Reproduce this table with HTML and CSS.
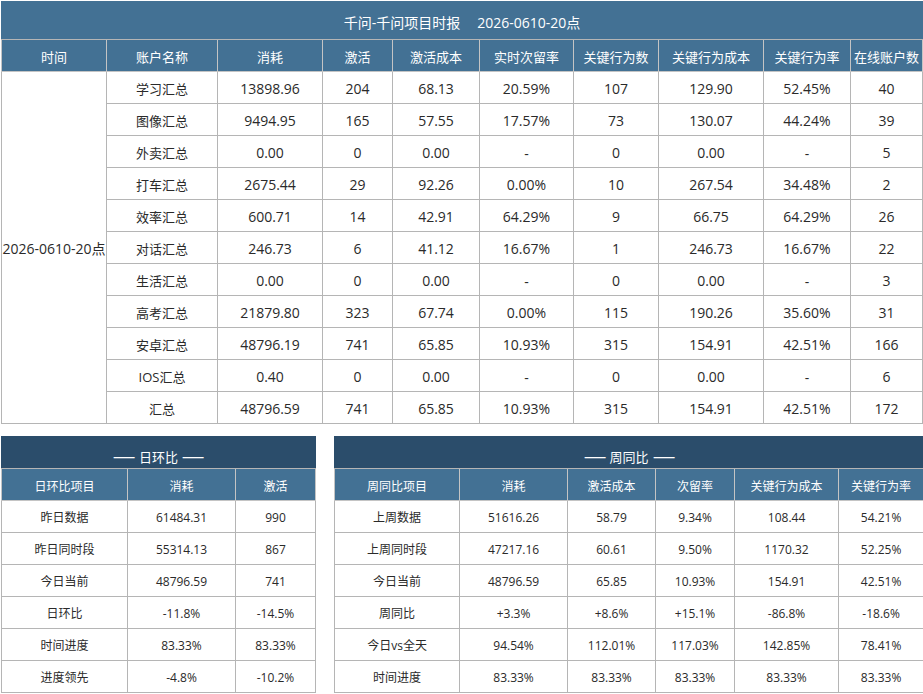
FILE: index.html
```html
<!DOCTYPE html>
<html lang="zh-CN">
<head>
<meta charset="utf-8">
<title>千问-千问项目时报</title>
<link rel="stylesheet" href="styles.css">
</head>
<body>
<div class="page">
  <table class="report main">
    <colgroup>
      <col style="width:105px"><col style="width:111px"><col style="width:105px"><col style="width:70px"><col style="width:87px"><col style="width:94px"><col style="width:85px"><col style="width:105px"><col style="width:87px"><col style="width:72px">
    </colgroup>
    <thead>
      <tr class="title-row"><th colspan="10">千问-千问项目时报<span class="gap"></span>2026-0610-20点</th></tr>
      <tr class="head-row">
        <th>时间</th><th>账户名称</th><th>消耗</th><th>激活</th><th>激活成本</th><th>实时次留率</th><th>关键行为数</th><th>关键行为成本</th><th>关键行为率</th><th>在线账户数</th>
      </tr>
    </thead>
    <tbody>
      <tr><td rowspan="11" class="time-cell">2026-0610-20点</td><td class="nm">学习汇总</td><td>13898.96</td><td>204</td><td>68.13</td><td>20.59%</td><td>107</td><td>129.90</td><td>52.45%</td><td>40</td></tr>
      <tr><td class="nm">图像汇总</td><td>9494.95</td><td>165</td><td>57.55</td><td>17.57%</td><td>73</td><td>130.07</td><td>44.24%</td><td>39</td></tr>
      <tr><td class="nm">外卖汇总</td><td>0.00</td><td>0</td><td>0.00</td><td><span class="dash">-</span></td><td>0</td><td>0.00</td><td><span class="dash">-</span></td><td>5</td></tr>
      <tr><td class="nm">打车汇总</td><td>2675.44</td><td>29</td><td>92.26</td><td>0.00%</td><td>10</td><td>267.54</td><td>34.48%</td><td>2</td></tr>
      <tr><td class="nm">效率汇总</td><td>600.71</td><td>14</td><td>42.91</td><td>64.29%</td><td>9</td><td>66.75</td><td>64.29%</td><td>26</td></tr>
      <tr><td class="nm">对话汇总</td><td>246.73</td><td>6</td><td>41.12</td><td>16.67%</td><td>1</td><td>246.73</td><td>16.67%</td><td>22</td></tr>
      <tr><td class="nm">生活汇总</td><td>0.00</td><td>0</td><td>0.00</td><td><span class="dash">-</span></td><td>0</td><td>0.00</td><td><span class="dash">-</span></td><td>3</td></tr>
      <tr><td class="nm">高考汇总</td><td>21879.80</td><td>323</td><td>67.74</td><td>0.00%</td><td>115</td><td>190.26</td><td>35.60%</td><td>31</td></tr>
      <tr><td class="nm">安卓汇总</td><td>48796.19</td><td>741</td><td>65.85</td><td>10.93%</td><td>315</td><td>154.91</td><td>42.51%</td><td>166</td></tr>
      <tr><td class="nm">IOS汇总</td><td>0.40</td><td>0</td><td>0.00</td><td><span class="dash">-</span></td><td>0</td><td>0.00</td><td><span class="dash">-</span></td><td>6</td></tr>
      <tr><td class="nm">汇总</td><td>48796.59</td><td>741</td><td>65.85</td><td>10.93%</td><td>315</td><td>154.91</td><td>42.51%</td><td>172</td></tr>
    </tbody>
  </table>

  <div class="bottom">
    <table class="report small day">
      <colgroup><col style="width:126px"><col style="width:108px"><col style="width:80px"></colgroup>
      <thead>
        <tr class="sub-title"><th colspan="3"><span class="rule">—</span>日环比<span class="rule">—</span></th></tr>
        <tr class="head-row"><th>日环比项目</th><th>消耗</th><th>激活</th></tr>
      </thead>
      <tbody>
        <tr><td>昨日数据</td><td>61484.31</td><td>990</td></tr>
        <tr><td>昨日同时段</td><td>55314.13</td><td>867</td></tr>
        <tr><td>今日当前</td><td>48796.59</td><td>741</td></tr>
        <tr><td>日环比</td><td>-11.8%</td><td>-14.5%</td></tr>
        <tr><td>时间进度</td><td>83.33%</td><td>83.33%</td></tr>
        <tr><td>进度领先</td><td>-4.8%</td><td>-10.2%</td></tr>
      </tbody>
    </table>

    <table class="report small week">
      <colgroup><col style="width:125px"><col style="width:108px"><col style="width:88px"><col style="width:79px"><col style="width:104px"><col style="width:85px"></colgroup>
      <thead>
        <tr class="sub-title"><th colspan="6"><span class="rule">—</span>周同比<span class="rule">—</span></th></tr>
        <tr class="head-row"><th>周同比项目</th><th>消耗</th><th>激活成本</th><th>次留率</th><th>关键行为成本</th><th>关键行为率</th></tr>
      </thead>
      <tbody>
        <tr><td>上周数据</td><td>51616.26</td><td>58.79</td><td>9.34%</td><td>108.44</td><td>54.21%</td></tr>
        <tr><td>上周同时段</td><td>47217.16</td><td>60.61</td><td>9.50%</td><td>1170.32</td><td>52.25%</td></tr>
        <tr><td>今日当前</td><td>48796.59</td><td>65.85</td><td>10.93%</td><td>154.91</td><td>42.51%</td></tr>
        <tr><td>周同比</td><td>+3.3%</td><td>+8.6%</td><td>+15.1%</td><td>-86.8%</td><td>-18.6%</td></tr>
        <tr><td>今日vs全天</td><td>94.54%</td><td>112.01%</td><td>117.03%</td><td>142.85%</td><td>78.41%</td></tr>
        <tr><td>时间进度</td><td>83.33%</td><td>83.33%</td><td>83.33%</td><td>83.33%</td><td>83.33%</td></tr>
      </tbody>
    </table>
  </div>
</div>
</body>
</html>
```

FILE: styles.css
```css
* { box-sizing: border-box; }
html, body {
  margin: 0;
  padding: 0;
  background: #ffffff;
}
body {
  font-family: "Open Sans", "Noto Sans CJK SC", sans-serif;
  color: #2a2a2a;
}
.page {
  padding: 1px 0 0 1px;
  width: 923px;
}
.report {
  border-collapse: collapse;
  table-layout: fixed;
}
.report th,
.report td {
  border: 1px solid #b5b5b5;
  padding: 0;
  text-align: center;
  vertical-align: middle;
  white-space: nowrap;
  overflow: visible;
  line-height: 16px;
  font-weight: normal;
}

/* top report */
.main {
  width: 921px;
  font-size: 14px;
}
.main .title-row th {
  height: 38px;
  background: #437194;
  color: #ffffff;
  font-size: 14px;
  border-color: #437194 #437194 #b5b5b5 #437194;
  padding-top: 4px;
}
.gap {
  display: inline-block;
  width: 17px;
}
.head-row th {
  height: 32px;
  background: #437194;
  color: #ffffff;
  border-color: #c4c4c4;
}
.main .head-row th {
  font-size: 13px;
  padding-top: 3px;
}
.main tbody td {
  height: 32px;
  padding-top: 3px;
}
.main tbody td.nm {
  font-size: 13px;
}
.dash {
  display: inline-block;
  vertical-align: -1px;
}

/* bottom comparison tables */
.bottom {
  display: flex;
  gap: 18px;
  margin-top: 12px;
  align-items: flex-start;
}
.small {
  font-size: 12px;
}
.day { width: 314px; }
.week { width: 589px; }
.sub-title th {
  height: 32px;
  background: #2b4d6b;
  color: #ffffff;
  font-size: 13px;
  border-color: #2b4d6b #2b4d6b #b5b5b5 #2b4d6b;
  padding-top: 8px;
}
.rule {
  display: inline-block;
  width: 18px;
  font-family: "DejaVu Sans", sans-serif;
  font-size: 16px;
  line-height: 10px;
  margin: 0 6px;
  text-align: center;
  transform: scaleX(1.45);
}
.small .head-row th {
  font-size: 12px;
  padding-top: 4px;
}
.small tbody td {
  height: 32px;
  padding-top: 3px;
}
```
